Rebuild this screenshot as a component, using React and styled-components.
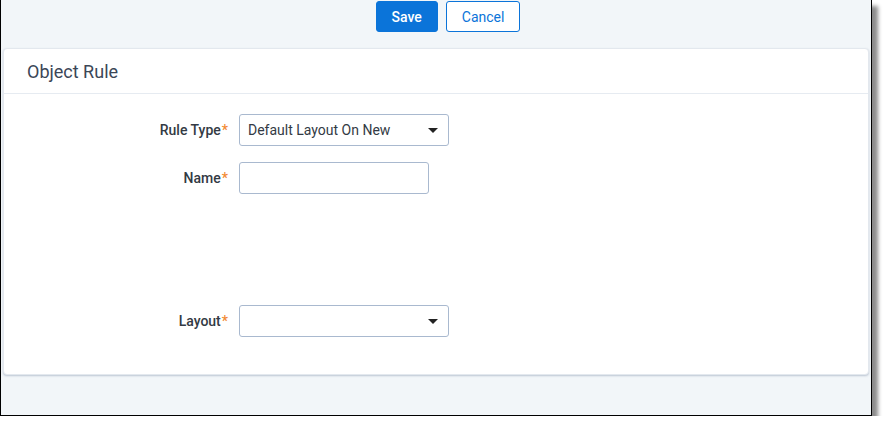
import React from "react";
import styled, { createGlobalStyle } from "styled-components";

const GlobalStyle = createGlobalStyle`
  html, body {
    margin: 0;
    padding: 0;
    background: #ffffff;
  }
  body {
    font-family: Roboto, "Liberation Sans", Arial, sans-serif;
  }
`;

export default function App() {
  const rows = [
    { label: "Rule Type", kind: "select", value: "Default Layout On New", width: 210 },
    { label: "Name", kind: "input", value: "", width: 190 },
    { kind: "spacer" },
    { label: "Layout", kind: "select", value: "", width: 210 }
  ];

  return (
    <>
      <GlobalStyle />
      <Frame>
        <Toolbar>
          <Button primary>Save</Button>
          <Button>Cancel</Button>
        </Toolbar>
        <Card>
          <CardHeader>Object Rule</CardHeader>
          <Form>
            {rows.map((row, i) => {
              if (row.kind === "spacer") return <Spacer key={i} />;
              return (
                <Row key={i}>
                  <Label>
                    {row.label}
                    <Required>*</Required>
                  </Label>
                  {row.kind === "select" ? (
                    <Select $width={row.width}>
                      <span>{row.value}</span>
                      <Caret viewBox="0 0 10 5">
                        <path d="M0 0 L10 0 L5 5 Z" fill="#222" />
                      </Caret>
                    </Select>
                  ) : (
                    <Input $width={row.width} />
                  )}
                </Row>
              );
            })}
          </Form>
        </Card>
      </Frame>
    </>
  );
}

const Frame = styled.div`
  width: 870px;
  height: 415px;
  background: #f2f6f9;
  border: 1px solid #000;
  border-top: none;
  box-shadow: 6px 6px 4px rgba(0, 0, 0, 0.45);
  display: flex;
  flex-direction: column;
`;

const Toolbar = styled.div`
  display: flex;
  justify-content: center;
  gap: 8px;
  padding: 1px 0 0 24px;
  height: 31px;
`;

const Button = styled.button`
  height: 31px;
  padding: 0 15px;
  border-radius: 3px;
  font-family: Roboto, "Liberation Sans", Arial, sans-serif;
  font-size: 14px;
  font-weight: ${(p) => (p.primary ? 500 : 400)};
  border: 1px solid #0b74d9;
  background: ${(p) => (p.primary ? "#0b74d9" : "#ffffff")};
  color: ${(p) => (p.primary ? "#ffffff" : "#0b74d9")};
  min-width: ${(p) => (p.primary ? "62px" : "74px")};
`;

const Card = styled.div`
  margin: 16px 2px 0 2px;
  background: #ffffff;
  border: 1px solid #e3e8ee;
  border-radius: 4px;
  box-shadow: 0 1px 2px rgba(90, 110, 140, 0.35);
  height: 327px;
  box-sizing: border-box;
`;

const CardHeader = styled.div`
  height: 44px;
  display: flex;
  align-items: center;
  padding-left: 23px;
  font-size: 18px;
  color: #3b4657;
  border-bottom: 1px solid #e6ebf1;
`;

const Form = styled.div`
  display: flex;
  flex-direction: column;
  gap: 16px;
  padding-top: 20px;
`;

const Row = styled.div`
  display: flex;
  align-items: center;
  gap: 11px;
`;

const Spacer = styled.div`
  height: 79px;
`;

const Label = styled.div`
  width: 224px;
  text-align: right;
  font-size: 14px;
  font-weight: 500;
  color: #333a44;
`;

const Required = styled.span`
  color: #f28a33;
  margin-left: 1px;
`;

const Select = styled.div`
  width: ${(p) => p.$width}px;
  height: 32px;
  box-sizing: border-box;
  border: 1px solid #a9b9cf;
  border-radius: 3px;
  display: flex;
  align-items: center;
  justify-content: space-between;
  padding: 0 10px 0 8px;
  font-size: 14px;
  color: #333a44;
`;

const Caret = styled.svg`
  width: 10px;
  height: 5px;
`;

const Input = styled.div`
  width: ${(p) => p.$width}px;
  height: 32px;
  box-sizing: border-box;
  border: 1px solid #a9b9cf;
  border-radius: 3px;
`;
